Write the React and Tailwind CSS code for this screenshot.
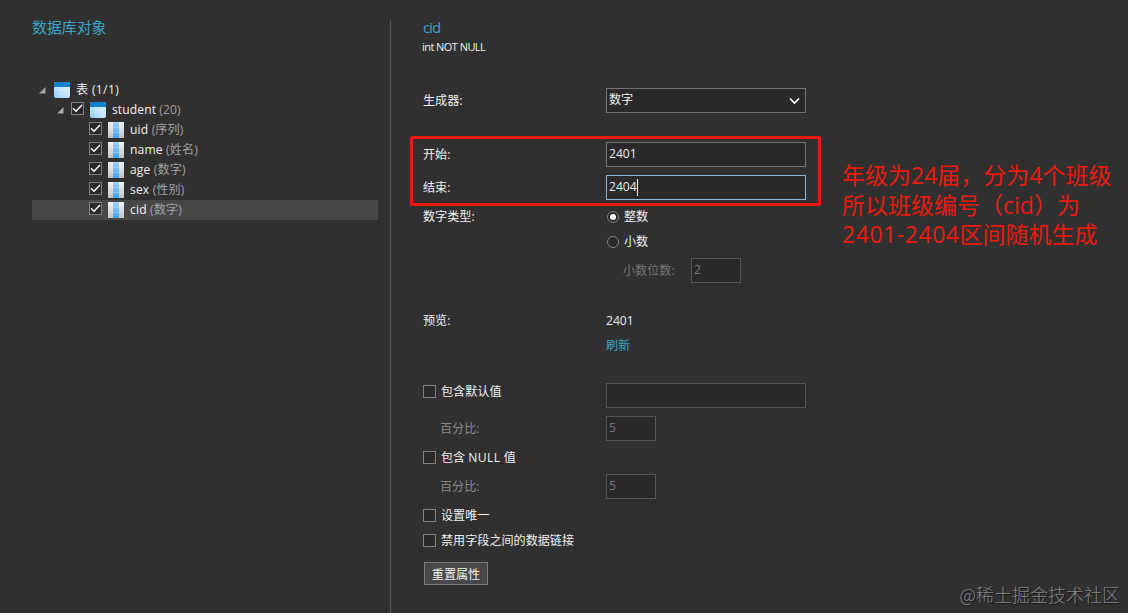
import React from "react";

const columns = [
  { name: "uid", kind: "(序列)" },
  { name: "name", kind: "(姓名)" },
  { name: "age", kind: "(数字)" },
  { name: "sex", kind: "(性别)" },
  { name: "cid", kind: "(数字)", selected: true },
];

function Expander() {
  return (
    <svg className="block shrink-0" width="7" height="7" viewBox="0 0 7 7">
      <path d="M6.5 0v6.5H0z" fill="#a6a6a6" />
    </svg>
  );
}

function TableIcon() {
  return (
    <svg className="block shrink-0" width="16" height="16" viewBox="0 0 16 16">
      <defs>
        <linearGradient id="tableBody" x1="0" y1="1" x2="1" y2="0">
          <stop offset="0" stopColor="#8ecbff" />
          <stop offset="0.5" stopColor="#c4e5ff" />
          <stop offset="1" stopColor="#e4f3ff" />
        </linearGradient>
      </defs>
      <rect width="16" height="16" rx="2" fill="url(#tableBody)" />
      <path d="M0 5V2a2 2 0 0 1 2-2h12a2 2 0 0 1 2 2v3z" fill="#0f7fd0" />
      <path d="M0 8.5h16M0 12h16M5.5 5v11M10.5 5v11" stroke="#fff" strokeOpacity="0.22" strokeWidth="0.6" />
    </svg>
  );
}

function ColumnIcon() {
  return (
    <svg className="block shrink-0" width="16" height="16" viewBox="0 0 16 16">
      <defs>
        <linearGradient id="colSide" x1="0" y1="0" x2="0" y2="1">
          <stop offset="0" stopColor="#f2f2f2" />
          <stop offset="1" stopColor="#bfc2c4" />
        </linearGradient>
        <linearGradient id="colMid" x1="0" y1="0" x2="0" y2="1">
          <stop offset="0" stopColor="#9fd3ff" />
          <stop offset="1" stopColor="#3fa2f5" />
        </linearGradient>
      </defs>
      <rect width="16" height="16" fill="url(#colSide)" />
      <rect x="5" width="6" height="16" fill="url(#colMid)" />
      <path d="M0 5.5h16M0 10.5h16" stroke="#fff" strokeOpacity="0.25" strokeWidth="0.7" />
    </svg>
  );
}

function Check({ checked }) {
  return (
    <span className="flex size-[13px] shrink-0 items-center justify-center border border-[#808080] bg-[#292929]">
      {checked && (
        <svg className="block" width="11" height="11" viewBox="0 0 11 11">
          <path d="M1 5.2 4 8.2 10 2" fill="none" stroke="#fff" strokeWidth="1.5" />
        </svg>
      )}
    </span>
  );
}

function Radio({ checked }) {
  return (
    <span className="flex size-[12px] shrink-0 items-center justify-center rounded-full border border-[#808080] bg-[#292929]">
      {checked && <span className="size-[6px] rounded-full bg-white" />}
    </span>
  );
}

function Field({ width = "w-[200px]", border = "border-[#747474]", color = "text-[#f0f0f0]", children }) {
  return (
    <div className={`flex h-[25px] shrink-0 items-center border bg-[#292929] pb-px pl-[2px] ${width} ${border} ${color}`}>
      {children}
    </div>
  );
}

function Row({ label, className = "", children }) {
  return (
    <div className={`flex h-[25px] items-center ${className}`}>
      <div className="w-[183px] shrink-0">{label}</div>
      {children}
    </div>
  );
}

function Digits({ children }) {
  return <span className="text-[12.1px]">{children}</span>;
}

function CheckLabel({ children, className = "" }) {
  return (
    <div className={`flex items-center gap-[5px] ${className}`}>
      <Check />
      <span>{children}</span>
    </div>
  );
}

export default function App() {
  return (
    <div className="relative flex h-[613px] w-[1128px] overflow-hidden whitespace-nowrap bg-[#303030] font-['Open_Sans','Noto_Sans_CJK_SC',sans-serif] text-[12.1px] leading-[18px] text-[#f0f0f0]">
      <aside className="w-[390px] shrink-0 pl-8 pt-[17px]">
        <h2 className="text-[14.9px] leading-5 text-[#3ba4c6]">数据库对象</h2>
        <div className="mt-[43px] w-[346px]">
          <div className="flex h-5 items-center pl-[7px]">
            <Expander />
            <span className="ml-2"><TableIcon /></span>
            <span className="ml-[6px] tracking-[0.35px]">表 (1/1)</span>
          </div>
          <div className="flex h-5 items-center pl-[25px]">
            <Expander />
            <span className="ml-[7px] pb-[3px]"><Check checked /></span>
            <span className="ml-[6px]"><TableIcon /></span>
            <span className="ml-[6px] tracking-[0.1px]">
              student <span className="text-[#a0a0a0]">(20)</span>
            </span>
          </div>
          {columns.map((c) => (
            <div key={c.name} className={`flex h-5 items-center pl-[57px] ${c.selected ? "bg-[#474747]" : ""}`}>
              <span className="pb-[3px]"><Check checked /></span>
              <span className="ml-[6px]"><ColumnIcon /></span>
              <span className="ml-[6px] tracking-[0.15px]">
                {c.name} <span className="text-[#a0a0a0]">{c.kind}</span>
              </span>
            </div>
          ))}
        </div>
      </aside>

      <div className="mt-5 w-px shrink-0 bg-[#555]" />

      <main className="flex-1 pl-8 pt-[18px]">
        <h2 className="text-[14.5px] leading-5 tracking-[-0.7px] text-[#3ba4c6]">cid</h2>
        <p className="-ml-px text-[11px] tracking-[-0.55px]">int NOT NULL</p>

        <Row label="生成器:" className="mt-8">
          <Field>
            <span className="flex-1">数字</span>
            <svg className="mr-[5px] mt-px block" width="11" height="8" viewBox="0 0 11 8">
              <path d="M1 1.5 5.5 6 10 1.5" fill="none" stroke="#fff" strokeWidth="1.6" />
            </svg>
          </Field>
        </Row>

        <div className="relative mt-[29px] flex flex-col gap-2">
          <Row label="开始:">
            <Field><Digits>2401</Digits></Field>
          </Row>
          <Row label="结束:">
            <Field border="border-[#8ab8dc]">
              <Digits>2404</Digits>
              <span className="h-[17px] w-px bg-white" />
            </Field>
          </Row>
          <div className="absolute -left-[13px] -top-[6px] h-[70px] w-[411px] rounded-[2px] border-[3px] border-[#eb1a0e]" />
          <div className="absolute left-[419px] top-[19px] text-[23px] leading-[29.7px] text-[#eb1a0e]">
            <p>年级为24届，分为4个班级</p>
            <p>所以班级编号（cid）为</p>
            <p><span className="tracking-[0.55px]">2401-2404</span>区间随机生成</p>
          </div>
        </div>

        <Row label="数字类型:" className="mt-1">
          <div className="flex items-center gap-[5px] pl-px"><Radio checked />整数</div>
        </Row>
        <Row>
          <div className="flex items-center gap-[5px] pl-px"><Radio />小数</div>
        </Row>
        <Row className="mt-1">
          <span className="w-[85px] pl-[17px] text-[#777]">小数位数:</span>
          <Field width="w-[50px]" border="border-[#555]" color="text-[#777]"><Digits>2</Digits></Field>
        </Row>

        <Row label="预览:" className="mt-[25px]"><Digits>2401</Digits></Row>
        <Row><span className="text-[#3ba4c6]">刷新</span></Row>

        <Row label={<CheckLabel className="pb-[8px]">包含默认值</CheckLabel>} className="mt-[25px]">
          <Field border="border-[#555]" />
        </Row>
        <Row label={<span className="pl-[17px] text-[#888]">百分比:</span>} className="mt-2">
          <Field width="w-[50px]" border="border-[#555]" color="text-[#777]"><Digits>5</Digits></Field>
        </Row>
        <Row label={<CheckLabel>包含 <span className="tracking-[0.4px]">NULL</span> 值</CheckLabel>} className="mt-1" />
        <Row label={<span className="pl-[17px] text-[#888]">百分比:</span>} className="mt-1">
          <Field width="w-[50px]" border="border-[#555]" color="text-[#777]"><Digits>5</Digits></Field>
        </Row>
        <Row label={<CheckLabel>设置唯一</CheckLabel>} className="mt-1" />
        <Row label={<CheckLabel>禁用字段之间的数据链接</CheckLabel>} />
        <button className="ml-px mt-[9px] flex h-[23px] w-[64px] items-center justify-center border border-[#7b7b7b] bg-[#484848] pt-[2px]">
          重置属性
        </button>
      </main>

      <div className="absolute right-[8px] top-[581px] text-[18px] leading-[26px] text-[#858585] [text-shadow:1px_1px_1px_#111] font-['Noto_Sans_CJK_SC',sans-serif] font-light">
        @稀土掘金技术社区
      </div>
    </div>
  );
}
